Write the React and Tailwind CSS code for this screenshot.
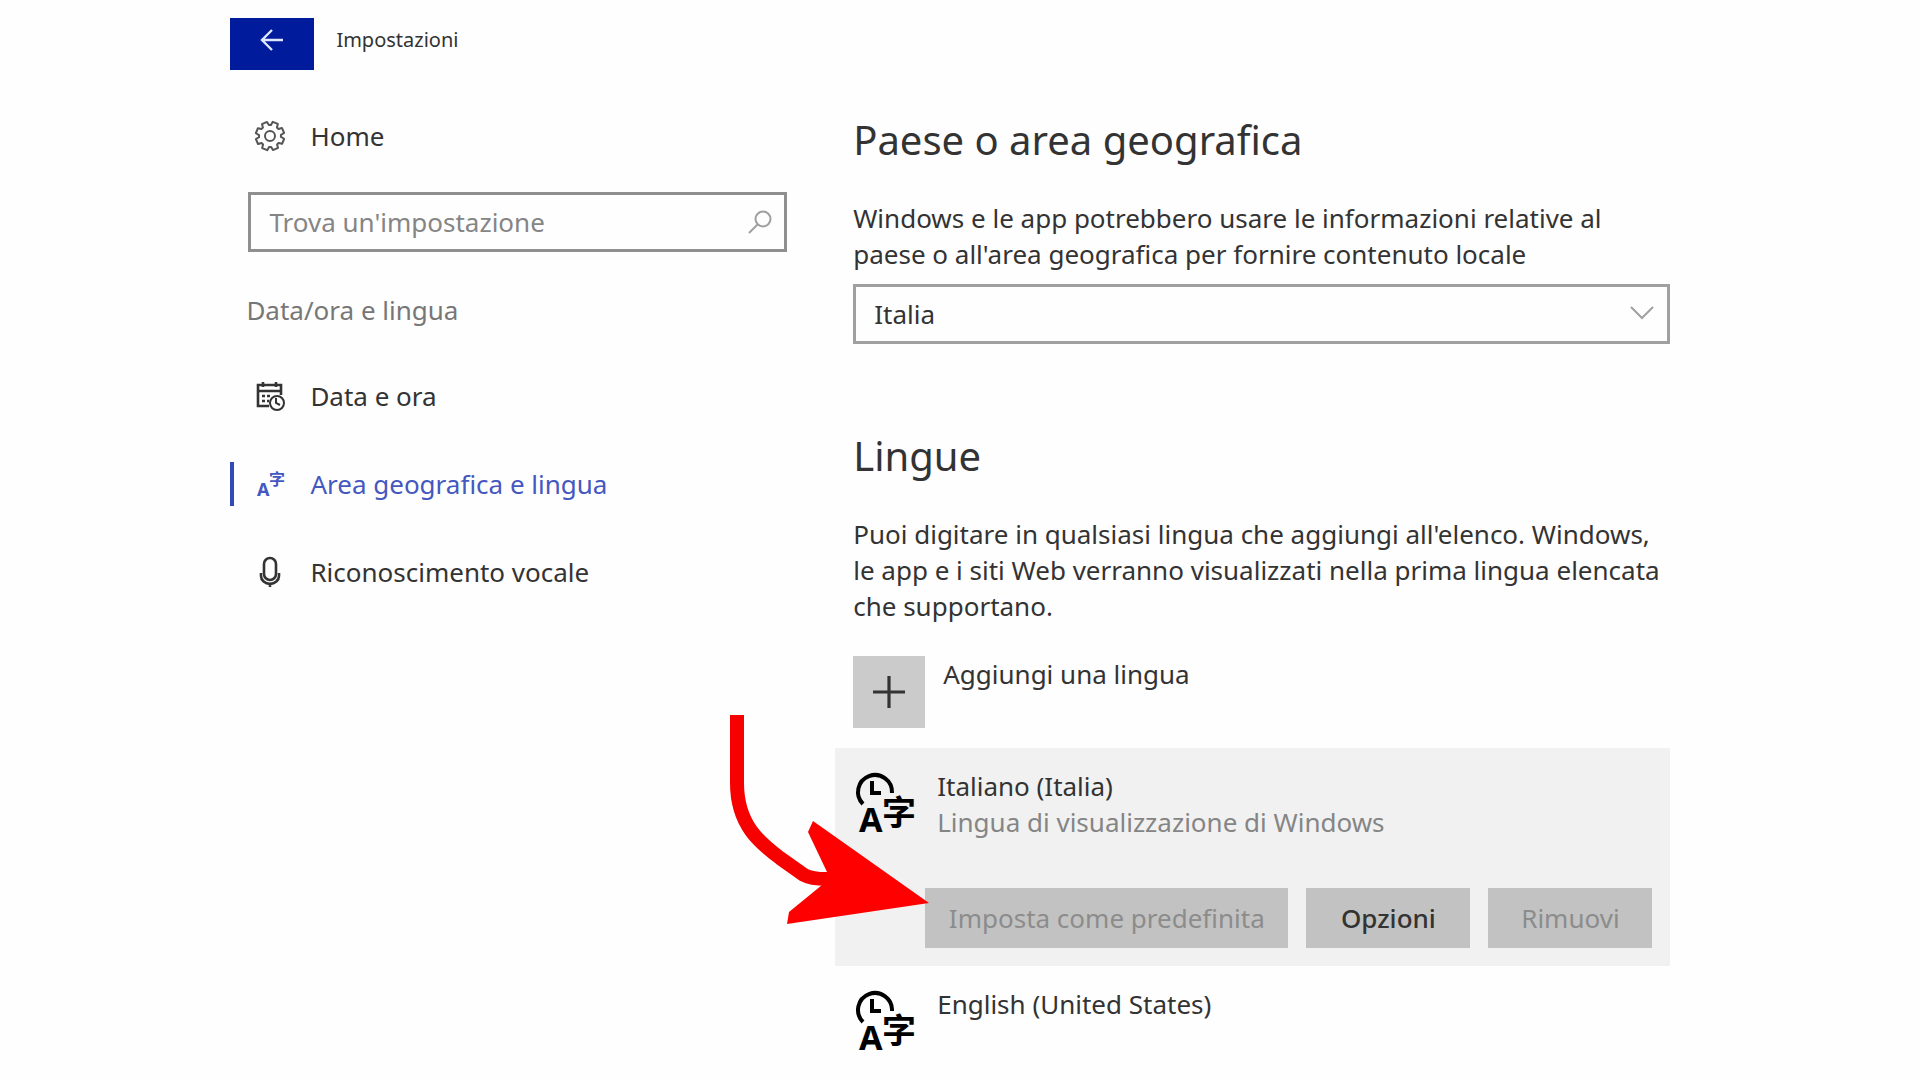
import { useState } from 'react';

const GearIcon = () => {
  const points = [];
  for (let i = 0; i < 8; i++) {
    [
      [-17, 11],
      [-11, 14.4],
      [11, 14.4],
      [17, 11],
    ].forEach(([offset, radius]) => {
      const angle = ((i * 45 + 22 + offset) * Math.PI) / 180;
      points.push(`${(16 + radius * Math.cos(angle)).toFixed(2)},${(16 + radius * Math.sin(angle)).toFixed(2)}`);
    });
  }
  return (
    <svg viewBox="0 0 32 32" className="size-8 text-[#555]" fill="none" stroke="currentColor" strokeWidth="2" strokeLinejoin="round">
      <polygon points={points.join(' ')} />
      <circle cx="16" cy="16" r="5" />
    </svg>
  );
};

const CalendarIcon = () => (
  <svg viewBox="0 0 32 32" className="size-8" fill="none" stroke="currentColor" strokeWidth="2.6">
    <path d="M15 26H4V5h23v10" />
    <path d="M4 11h23M9 2v5M22 2v5" />
    <path d="M8 16h3M13 16h3M8 21h3M13 21h2" />
    <circle cx="23" cy="23" r="7" fill="white" strokeWidth="2" />
    <path d="M22 18v5l4 2" strokeWidth="2" />
  </svg>
);

const LanguageIcon = () => (
  <svg viewBox="0 0 32 32" className="size-8 overflow-visible" fill="currentColor" fontWeight="700">
    <text x="3" y="28" fontSize="18" className="font-['Noto_Sans',sans-serif]">A</text>
    <text x="15" y="17" fontSize="16" className="font-['Noto_Sans_CJK_SC',sans-serif]">字</text>
  </svg>
);

const MicIcon = () => (
  <svg viewBox="0 0 32 32" className="size-8" fill="none" stroke="currentColor" strokeWidth="2.6">
    <rect x="10" y="2" width="12" height="22" rx="6" />
    <path d="M7 17v3a8 7 0 0 0 18 0v-3M16 27v4" />
  </svg>
);

const LanguagePackIcon = () => (
  <svg viewBox="0 0 64 64" className="size-16 shrink-0 overflow-visible" fill="none" stroke="black" strokeWidth="4">
    <path d="M10 36A17 17 0 1 1 39 25" />
    <path d="M19 13v12h9" />
    <text x="6" y="64" fontSize="34" fontWeight="700" fill="black" stroke="none" className="font-['Noto_Sans',sans-serif]">A</text>
    <text x="29" y="57" fontSize="34" fontWeight="700" fill="black" stroke="none" className="font-['Noto_Sans_CJK_SC',sans-serif]">字</text>
  </svg>
);

const navItems = [
  { id: 'date', label: 'Data e ora', icon: CalendarIcon },
  { id: 'region', label: 'Area geografica e lingua', icon: LanguageIcon },
  { id: 'speech', label: 'Riconoscimento vocale', icon: MicIcon },
];

const Sidebar = () => {
  const [active, setActive] = useState('region');
  const [query, setQuery] = useState('');

  return (
    <aside>
      <a href="#home" className="flex h-16 items-center gap-6 pl-6">
        <GearIcon />
        Home
      </a>

      <div className="mt-6 ml-[18px] flex h-15 items-center border-3 border-[#8f8f8f] pr-3 pl-[18px]">
        <input
          type="text"
          aria-label="Trova un'impostazione"
          placeholder="Trova un'impostazione"
          value={query}
          onChange={(e) => setQuery(e.target.value)}
          className="min-w-0 flex-1 outline-none placeholder:text-[#858585]"
        />
        <svg viewBox="0 0 24 24" className="size-6 text-[#a0a0a0]" fill="none" stroke="currentColor" strokeWidth="2">
          <circle cx="15" cy="9" r="7.5" />
          <path d="M9.5 14.5 1 23" />
        </svg>
      </div>

      <h2 className="mt-10 mb-6 ml-4 text-[#777]">Data/ora e lingua</h2>

      <nav>
        {navItems.map(({ id, label, icon: Icon }) => (
          <a
            key={id}
            href={`#${id}`}
            onClick={() => setActive(id)}
            className={`flex h-22 items-center ${active === id ? 'text-[#4557c0]' : ''}`}
          >
            <span className={`mr-5 h-11 w-1 ${active === id ? 'bg-[#3449b8]' : ''}`} />
            <span className="mr-6">
              <Icon />
            </span>
            {label}
          </a>
        ))}
      </nav>
    </aside>
  );
};

const ActionButton = ({ children, className, disabled }) => (
  <button
    type="button"
    disabled={disabled}
    className={`h-15 bg-[#c2c2c2] ${disabled ? 'text-[#8c8c8c]' : 'font-medium'} ${className}`}
  >
    {children}
  </button>
);

const PointerArrow = () => (
  <svg viewBox="0 0 220 220" className="pointer-events-none absolute -top-[38px] -left-[115px] w-[220px]" fill="#fe0000">
    <path
      d="M17 5V73C17 115 40 133 60 148L84 165Q91 169 107 169"
      fill="none"
      stroke="#f60000"
      strokeWidth="14"
    />
    <path d="M209 193 93 111 88 122 107 162 102 175 69 202 67 214Z" />
  </svg>
);

export default function App() {
  const [country, setCountry] = useState('Italia');

  return (
    <div className="min-h-screen bg-[#fefefe] pt-[18px] pr-[13%] pl-[12%] font-['Noto_Sans','Open_Sans',sans-serif] text-[26px] leading-9 text-[#333]">
      <header className="flex items-start gap-[22px]">
        <button type="button" aria-label="Indietro" className="flex h-[52px] w-21 justify-center bg-[#001c9c] pt-2.5 text-[#dfe6ff]">
          <svg viewBox="0 0 24 24" className="size-6" fill="none" stroke="currentColor" strokeWidth="2.4">
            <path d="M23 12H2M12 2 2 12l10 10" />
          </svg>
        </button>
        <h1 className="pt-1 text-xl leading-9">Impostazioni</h1>
      </header>

      <div className="mt-[34px] grid grid-cols-[2fr_3fr] gap-12">
        <Sidebar />

        <main>
          <section className="pl-[18px]">
            <h2 className="pt-3 text-[40px] leading-12">Paese o area geografica</h2>
            <p className="mt-9">
              Windows e le app potrebbero usare le informazioni relative al
              <br />
              paese o all'area geografica per fornire contenuto locale
            </p>
            <div className="relative mt-3">
              <select
                aria-label="Paese o area geografica"
                value={country}
                onChange={(e) => setCountry(e.target.value)}
                className="h-15 w-full appearance-none border-3 border-[#a0a0a0] bg-transparent pl-[18px]"
              >
                <option>Italia</option>
              </select>
              <svg viewBox="0 0 24 24" className="pointer-events-none absolute top-4 right-4 size-6 text-[#a0a0a0]" fill="none" stroke="currentColor" strokeWidth="2">
                <path d="m1 7 11 11L23 7" />
              </svg>
            </div>
          </section>

          <section>
            <div className="mt-22 pl-[18px]">
              <h2 className="text-[40px] leading-12">Lingue</h2>
              <p className="mt-9">
                Puoi digitare in qualsiasi lingua che aggiungi all'elenco. Windows,
                <br />
                le app e i siti Web verranno visualizzati nella prima lingua elencata
                <br />
                che supportano.
              </p>
              <button type="button" className="mt-8 flex items-start gap-[18px]">
                <span className="flex size-18 items-center justify-center bg-[#cbcbcb]">
                  <svg viewBox="0 0 30 30" className="size-8" fill="none" stroke="currentColor" strokeWidth="3">
                    <path d="M15 0v30M0 15h30" />
                  </svg>
                </span>
                Aggiungi una lingua
              </button>
            </div>

            <div className="relative mt-5 bg-[#f1f1f1] px-[18px] pt-5 pb-[18px]">
              <PointerArrow />
              <div className="flex gap-5">
                <LanguagePackIcon />
                <div>
                  <h3>Italiano (Italia)</h3>
                  <p className="text-[#858585]">Lingua di visualizzazione di Windows</p>
                </div>
              </div>
              <div className="mt-12 flex gap-[18px] pl-18">
                <ActionButton disabled className="flex-1">Imposta come predefinita</ActionButton>
                <ActionButton className="w-41">Opzioni</ActionButton>
                <ActionButton disabled className="w-41">Rimuovi</ActionButton>
              </div>
            </div>

            <div className="flex gap-5 pt-5 pl-[18px]">
              <LanguagePackIcon />
              <h3>English (United States)</h3>
            </div>
          </section>
        </main>
      </div>
    </div>
  );
}
